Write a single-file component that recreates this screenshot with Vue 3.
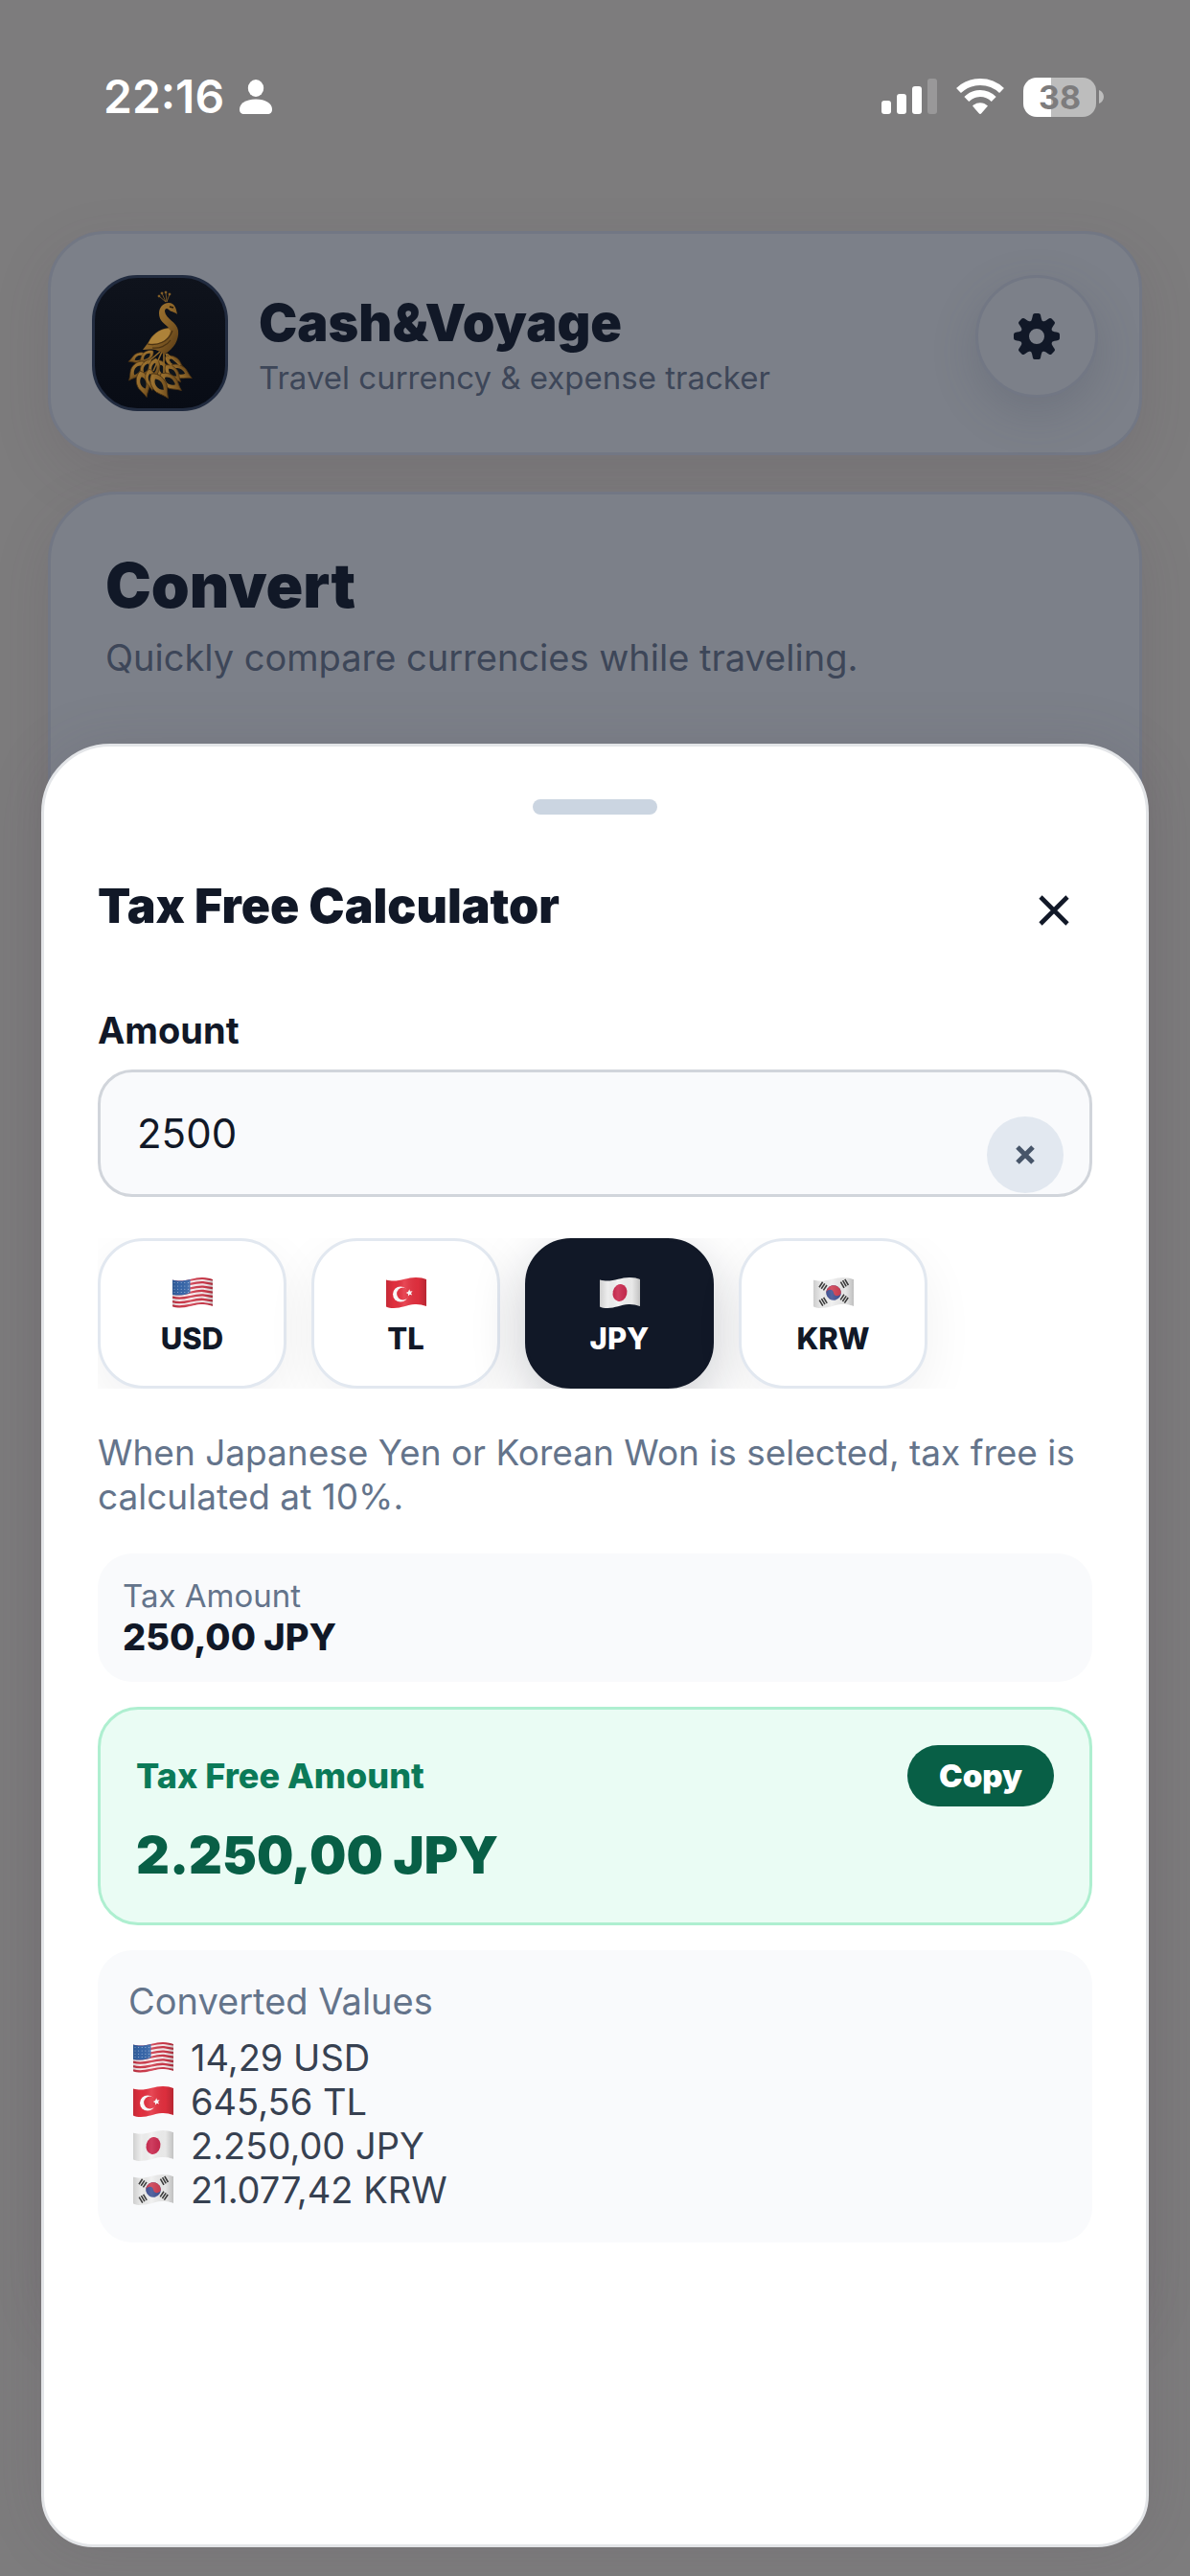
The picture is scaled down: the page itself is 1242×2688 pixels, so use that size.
<template>
  <div class="screen">
    <!-- Flag artwork shared by the chips and the result list -->
    <svg class="defs" width="0" height="0" aria-hidden="true">
      <defs>
        <clipPath id="flag-clip">
          <path :d="flagShape" />
        </clipPath>
        <linearGradient id="flag-shade" x1="0" x2="1" y1="0" y2="0">
          <stop offset="0" stop-color="#000" stop-opacity="0.14" />
          <stop offset="0.2" stop-color="#000" stop-opacity="0.02" />
          <stop offset="0.45" stop-color="#fff" stop-opacity="0.12" />
          <stop offset="0.8" stop-color="#000" stop-opacity="0.04" />
          <stop offset="1" stop-color="#000" stop-opacity="0.2" />
        </linearGradient>
      </defs>
      <symbol id="flag-us" viewBox="0 0 42 32">
        <g clip-path="url(#flag-clip)">
          <rect width="42" height="32" fill="#fbeef0" />
          <path
            v-for="n in 7"
            :key="n"
            :d="`M0 ${n * 4.4 - 1.4} C12 ${n * 4.4 + 2.6} 20 ${n * 4.4 - 4.4} 32 ${n * 4.4 - 3.6} L42 ${n * 4.4 - 2}`"
            fill="none"
            stroke="#cf3a4b"
            stroke-width="2.3"
          />
          <path d="M0 0H18.5V16C12 19 6 19 0 18Z" fill="#3767ab" />
          <g fill="#b9cbe6">
            <circle v-for="n in 20" :key="n" :cx="2 + ((n - 1) % 5) * 3.6" :cy="5.6 + Math.floor((n - 1) / 5) * 3.3" r="0.5" />
          </g>
          <path :d="flagShape" fill="url(#flag-shade)" />
        </g>
      </symbol>
      <symbol id="flag-tr" viewBox="0 0 42 32">
        <g clip-path="url(#flag-clip)">
          <rect width="42" height="32" fill="#e5303f" />
          <circle cx="15" cy="17.5" r="8" fill="#fff" />
          <circle cx="17.6" cy="17" r="6.5" fill="#e5303f" />
          <path d="M24.2 12.2l.9 2.3 2.5-.3-1.6 2 1.2 2.3-2.5-.8-1.7 1.9-.1-2.6-2.3-1.1 2.4-.9z" fill="#fff" />
          <path :d="flagShape" fill="url(#flag-shade)" />
        </g>
      </symbol>
      <symbol id="flag-jp" viewBox="0 0 42 32">
        <g clip-path="url(#flag-clip)">
          <rect width="42" height="32" fill="#f2f2f2" />
          <ellipse cx="21" cy="16" rx="7.4" ry="9" transform="rotate(14 21 16)" fill="#c9254b" />
          <path :d="flagShape" fill="url(#flag-shade)" />
        </g>
      </symbol>
      <symbol id="flag-kr" viewBox="0 0 42 32">
        <g clip-path="url(#flag-clip)">
          <rect width="42" height="32" fill="#efefef" />
          <g transform="rotate(-12 21 16)">
            <circle cx="21" cy="16" r="7.8" fill="#3f5194" />
            <path d="M13.2 16a7.8 7.8 0 0 1 15.600 0a3.9 3.9 0 0 1-7.800 0a3.9 3.9 0 0 0-7.800 0Z" fill="#cd3c50" />
          </g>
          <g stroke="#3d3d3d" stroke-width="1.6">
            <path d="M6.4 9.6l3.6-5.4M8.6 11.2l3.6-5.4M10.8 12.8l3.6-5.4" transform="translate(-.4 .6)" />
            <path d="M28.4 4.6l3.6 6.2M30.6 3.2l3.6 6.2M32.8 1.8l3.6 6.2" />
            <path d="M6.2 23.6l3.6 6M8.4 22.2l3.6 6M10.6 20.8l3.6 6" />
            <path d="M28.2 24.4l3.8-5.6M30.4 26l3.8-5.6M32.4 27.6l3.8-5.6" transform="translate(0 -1)" />
          </g>
          <path :d="flagShape" fill="url(#flag-shade)" />
        </g>
      </symbol>
    </svg>

    <!-- Page behind the sheet -->
    <div class="page">
      <header class="status">
        <div class="status-left">
          <span class="clock">22:16</span>
          <svg width="34" height="36" viewBox="0 0 34 36" fill="#fff" aria-hidden="true">
            <ellipse cx="17" cy="9" rx="8.2" ry="9" />
            <path d="M0 31C0 25 7 20.500 17 20.500S34 25 34 31C34 34.500 32.500 36 29 36H5C1.500 36 0 34.500 0 31Z" />
          </svg>
        </div>
        <div class="status-right">
          <svg width="58" height="38" viewBox="0 0 58 38" fill="#fff" aria-hidden="true">
            <rect x="0" y="23" width="10" height="14" rx="3" />
            <rect x="16" y="16" width="10" height="21" rx="3" />
            <rect x="32" y="8" width="10" height="29" rx="3" />
            <rect x="48" y="0" width="10" height="37" rx="3" opacity="0.22" />
          </svg>
          <svg width="50" height="38" viewBox="0 0 50 38" aria-hidden="true">
            <g fill="none" stroke="#fff" stroke-width="7">
              <path d="M2.500 12.500C15 .5 35 .5 47.500 12.500" />
              <path d="M10.800 21.500C19 13.500 31 13.500 39.200 21.500" />
            </g>
            <path d="M17 28.500C21.500 24 28.500 24 33 28.500L26.500 36C25.500 37.300 24.500 37.300 23.500 36Z" fill="#fff" />
          </svg>
          <div class="battery">
            <span class="battery-body">38</span>
            <svg width="5" height="14" viewBox="0 0 5 14" fill="#bdbdbd" aria-hidden="true">
              <path d="M0 0C3 1 5 4 5 7S3 13 0 14Z" />
            </svg>
          </div>
        </div>
      </header>

      <main class="cards">
        <section class="card brand">
          <svg class="logo" viewBox="0 0 142 142" aria-hidden="true">
            <defs>
              <linearGradient id="gold" x1="0" y1="0" x2="1" y2="1">
                <stop offset="0" stop-color="#a87c35" />
                <stop offset="0.5" stop-color="#8c6428" />
                <stop offset="1" stop-color="#553814" />
              </linearGradient>
              <linearGradient id="night" x1="0" y1="0" x2="0" y2="1">
                <stop offset="0" stop-color="#0f131c" />
                <stop offset="1" stop-color="#080c15" />
              </linearGradient>
            </defs>
            <rect x="1.500" y="1.500" width="139" height="139" rx="46" fill="url(#night)" stroke="#212b3f" stroke-width="3" />
            <g v-for="(f, i) in feathers" :key="i" :transform="`translate(${f[0]} ${f[1]}) rotate(${f[2]}) scale(${f[3]})`">
              <path d="M0-11C6-8 8 0 6 6C4 10 2 12 0 17C-2 12-4 10-6 6C-8 0-6-8 0-11Z" fill="url(#gold)" stroke="#4a3213" stroke-width="0.800" />
              <path d="M0-5C4-2 4 3 1 8C-4 5-4-2 0-5Z" fill="#0f141a" />
            </g>
            <path d="M71 80L57 92M73 80L64 100M75 81L75 102M77 82L84 98M78 82L92 94" stroke="#8f6729" stroke-width="1.600" fill="none" />
            <path d="M80 29C74 29 70 34 70 40C70 48 76 51 80 55C70 56 62 63 59 70L53 78C62 77 69 77 75 83C86 77 91 67 90 58C89 49 77 46 76 38C76 35 78 34 80 36C83 39 86 38 89 41C88 36 87 29 80 29Z" fill="url(#gold)" />
            <path d="M80 56C70 56 63 63 59 71C68 73 80 70 82 58Z" fill="#ad8239" />
            <path d="M58 72C68 74 80 70 84 58M63 76C70 77 78 74 82 68" stroke="#4a3213" stroke-width="1.200" fill="none" />
            <path d="M81 33l4 1" stroke="#20160a" stroke-width="1.400" />
            <g stroke="#8a6328" stroke-width="0.800" fill="#8a6328">
              <path d="M77 28L70 22M77 28L73 19M78 28L77 18M78 28L81 20" />
              <circle cx="70" cy="22" r="1" />
              <circle cx="73" cy="19" r="1" />
              <circle cx="77" cy="18" r="1" />
              <circle cx="81" cy="20" r="1" />
            </g>
          </svg>
          <div class="brand-text">
            <h1>Cash&amp;Voyage</h1>
            <p>Travel currency &amp; expense tracker</p>
          </div>
          <button class="settings" type="button" aria-label="Settings">
            <svg width="48" height="48" viewBox="-24 -24 48 48" aria-hidden="true">
              <circle r="12.500" fill="none" stroke="#111827" stroke-width="9" />
              <path
                v-for="n in 8"
                :key="n"
                d="M-6.500-15C-4.800-17-4.600-20-4-22.400Q-3.600-24-2-24H2Q3.600-24 4-22.400C4.600-20 4.800-17 6.500-15Z"
                :transform="`rotate(${n * 45})`"
                fill="#111827"
              />
            </svg>
          </button>
        </section>

        <section class="card convert">
          <h2>Convert</h2>
          <p>Quickly compare currencies while traveling.</p>
          <div class="convert-label">Amount</div>
        </section>
      </main>
    </div>

    <!-- Bottom sheet -->
    <div class="overlay">
      <section class="sheet" role="dialog" aria-labelledby="sheet-title">
        <div class="handle"></div>
        <div class="sheet-head">
          <h2 id="sheet-title">Tax Free Calculator</h2>
          <button class="close" type="button" aria-label="Close">
            <svg width="32" height="32" viewBox="0 0 32 32" aria-hidden="true">
              <path d="M2 2L30 30M30 2L2 30" stroke="#111827" stroke-width="4.600" />
            </svg>
          </button>
        </div>

        <label class="field-label" for="amount">Amount</label>
        <div class="field">
          <input id="amount" v-model="amount" type="text" inputmode="decimal" />
          <button class="clear" type="button" aria-label="Clear" @click="amount = ''">
            <svg width="20" height="20" viewBox="0 0 20 20" aria-hidden="true">
              <path d="M2 2L18 18M18 2L2 18" stroke="#475569" stroke-width="5" />
            </svg>
          </button>
        </div>

        <div class="chips">
          <button
            v-for="c in currencies"
            :key="c.code"
            class="chip"
            :class="{ 'chip--active': c.code === selected }"
            type="button"
            @click="selected = c.code"
          >
            <svg class="flag"><use :href="'#flag-' + c.flag" /></svg>
            <span>{{ c.code }}</span>
          </button>
        </div>

        <p class="note">When Japanese Yen or Korean Won is selected, tax free is calculated at 10%.</p>

        <div class="results">
          <div class="tax">
            <div class="tax-label">Tax Amount</div>
            <div class="tax-value">250,00 JPY</div>
          </div>

          <div class="total">
            <div class="total-head">
              <span>Tax Free Amount</span>
              <button class="copy" type="button">Copy</button>
            </div>
            <div class="total-value">2.250,00 JPY</div>
          </div>

          <div class="converted">
            <h3>Converted Values</h3>
            <ul>
              <li v-for="c in currencies" :key="c.code">
                <svg class="flag"><use :href="'#flag-' + c.flag" /></svg>
                <span>{{ c.value }} {{ c.code }}</span>
              </li>
            </ul>
          </div>
        </div>
      </section>
    </div>
  </div>
</template>

<script setup>
import { ref } from 'vue'

const amount = ref('2500')
const selected = ref('JPY')

const currencies = [
  { code: 'USD', flag: 'us', value: '14,29' },
  { code: 'TL', flag: 'tr', value: '645,56' },
  { code: 'JPY', flag: 'jp', value: '2.250,00' },
  { code: 'KRW', flag: 'kr', value: '21.077,42' }
]

// waving outline used by every flag
const flagShape = 'M0 2.500C12 6 20 0 31 0C36 0 39 .8 42 2V30C38 28.500 34 27.800 30 28C22 28.400 16 32 8 32C5 32 2 31.500 0 30.500Z'

// tail feathers: x, y, rotation, scale
const feathers = [
  [50, 86, 70, 0.75],
  [58, 84, 50, 0.7],
  [48, 98, 38, 0.9],
  [57, 96, 30, 0.8],
  [84, 90, -60, 0.8],
  [90, 100, -62, 0.95],
  [73, 98, -20, 0.9],
  [65, 96, 12, 0.85],
  [83, 101, -42, 0.85],
  [53, 111, -14, 1],
  [61, 107, -8, 0.8],
  [80, 110, -52, 1],
  [69, 113, -34, 1.1]
]
</script>

<style>
body {
  margin: 0;
  background: #7d7d7d;
}
</style>

<style scoped>
.screen {
  position: relative;
  height: 100vh;
  overflow: hidden;
  background: #7d7c7d;
  font-family: Inter, "Liberation Sans", sans-serif;
  color: #111827;
}
.defs {
  position: absolute;
}
h1, h2, h3, p, ul {
  margin: 0;
  padding: 0;
}
button {
  border: 0;
  padding: 0;
  font-family: inherit;
  color: inherit;
  cursor: pointer;
}
svg {
  display: block;
  flex: none;
}

/* Status bar */
.status {
  display: flex;
  align-items: center;
  justify-content: space-between;
  height: 202px;
  padding: 0 90px 0 108px;
}
.status-left,
.status-right,
.battery {
  display: flex;
  align-items: center;
}
.status-left {
  gap: 16px;
}
.clock {
  font-size: 48px;
  font-weight: 600;
  line-height: 60px;
  color: #fff;
}
.status-right {
  gap: 20px;
}
.battery {
  gap: 3px;
}
.battery-body {
  width: 76px;
  border-radius: 14px;
  background: linear-gradient(90deg, #fff 38%, #bdbdbd 38%);
  color: #7d7c7d;
  font-size: 34px;
  font-weight: 700;
  line-height: 41px;
  text-align: center;
}

/* Cards */
.cards {
  display: flex;
  flex-direction: column;
  gap: 38px;
  padding: 39px 50px 0;
}
.card {
  border: 3px solid #727784;
  background: #7c8089;
  box-shadow: 0 20px 60px rgba(80, 66, 76, 0.14);
}
.brand {
  display: flex;
  align-items: flex-start;
  padding: 43px;
  border-radius: 60px;
}
.logo {
  width: 142px;
  height: 142px;
}
.brand-text {
  flex: 1;
  padding: 16px 32px 0;
}
.brand-text h1 {
  font-size: 54px;
  font-weight: 900;
  line-height: 68px;
}
.brand-text p {
  font-size: 33px;
  line-height: 46px;
  color: #3d4658;
}
.settings {
  display: flex;
  align-items: center;
  justify-content: center;
  width: 128px;
  height: 128px;
  border: 3px solid #727784;
  border-radius: 50%;
  background: #7c8089;
  box-shadow: 0 16px 48px rgba(60, 66, 86, 0.2);
}
.convert {
  height: 1800px;
  padding: 57px;
  border-radius: 72px;
}
.convert h2 {
  font-size: 64px;
  font-weight: 900;
  line-height: 76px;
}
.convert p {
  margin: 14px 0 60px;
  font-size: 38px;
  line-height: 46px;
  color: #3d4658;
}
.convert-label {
  font-size: 38px;
  font-weight: 700;
  line-height: 46px;
}

/* Sheet */
.overlay {
  position: absolute;
  inset: 0;
  display: flex;
  flex-direction: column;
  justify-content: flex-end;
  padding: 0 43px 30px;
}
.sheet {
  box-sizing: border-box;
  height: 70vh;
  padding: 55px 56px;
  border: 3px solid #e3e5e8;
  border-radius: 72px 72px 54px 54px;
  background: #fff;
  box-shadow: 0 0 60px rgba(80, 66, 76, 0.14);
}
.handle {
  width: 130px;
  height: 16px;
  margin: 0 auto 60px;
  border-radius: 8px;
  background: #cbd5e1;
}
.sheet-head {
  display: flex;
  align-items: flex-start;
  justify-content: space-between;
  margin-bottom: 62px;
}
.sheet-head h2 {
  font-size: 50px;
  font-weight: 900;
  line-height: 70px;
}
.close {
  display: flex;
  align-items: center;
  justify-content: center;
  width: 80px;
  height: 80px;
  background: none;
}
.field-label {
  display: block;
  margin-bottom: 18px;
  font-size: 38px;
  font-weight: 700;
  line-height: 46px;
}
.field {
  position: relative;
}
.field input {
  display: block;
  box-sizing: border-box;
  width: 100%;
  height: 133px;
  padding: 0 120px 0 38px;
  border: 3px solid #d1d5db;
  border-radius: 36px;
  outline: none;
  background: #f9fafc;
  color: #111827;
  font-family: inherit;
  font-size: 42px;
}
.clear {
  position: absolute;
  right: 30px;
  bottom: 4px;
  display: flex;
  align-items: center;
  justify-content: center;
  width: 80px;
  height: 80px;
  border-radius: 50%;
  background: #e2e8f0;
}
.chips {
  display: flex;
  gap: 26px;
  margin: 43px 0 44px;
  overflow: hidden;
}
.chip {
  display: flex;
  flex-direction: column;
  align-items: center;
  justify-content: center;
  gap: 13px;
  box-sizing: border-box;
  width: 197px;
  height: 157px;
  padding-top: 8px;
  border: 3px solid #e2e8f0;
  border-radius: 48px;
  background: #fff;
  box-shadow: 0 18px 54px rgba(17, 24, 39, 0.06);
  font-size: 31px;
  font-weight: 800;
  line-height: 38px;
}
.chip--active {
  border-color: #111827;
  background: #111827;
  color: #fff;
  box-shadow: 0 18px 54px rgba(17, 24, 39, 0.22);
}
.flag {
  width: 42px;
  height: 32px;
}
.note {
  margin-bottom: 36px;
  font-size: 37px;
  line-height: 46px;
  color: #64748b;
}

/* Results */
.results {
  display: flex;
  flex-direction: column;
  gap: 26px;
}
.tax,
.converted {
  border-radius: 36px;
  background: #f9fafc;
}
.tax {
  padding: 24px 26px;
}
.tax-label {
  font-size: 33px;
  line-height: 40px;
  color: #64748b;
}
.tax-value {
  font-size: 38px;
  font-weight: 800;
  line-height: 46px;
}
.total {
  padding: 37px;
  border: 3px solid #aeefd0;
  border-radius: 42px;
  background: #eafcf4;
}
.total-head {
  display: flex;
  align-items: center;
  justify-content: space-between;
  margin-bottom: 18px;
  font-size: 36px;
  font-weight: 800;
  color: #0b7a58;
}
.copy {
  width: 153px;
  height: 64px;
  border-radius: 32px;
  background: #085f46;
  color: #fff;
  font-size: 33px;
  font-weight: 900;
}
.total-value {
  font-size: 54px;
  font-weight: 900;
  line-height: 66px;
  color: #085f46;
}
.converted {
  padding: 30px 32px 32px;
}
.converted h3 {
  margin-bottom: 13px;
  font-size: 38px;
  font-weight: 400;
  line-height: 46px;
  color: #64748b;
}
.converted ul {
  list-style: none;
}
.converted li {
  display: flex;
  align-items: center;
  gap: 18px;
  padding-left: 5px;
  font-size: 38px;
  line-height: 46px;
  color: #374151;
}
</style>
